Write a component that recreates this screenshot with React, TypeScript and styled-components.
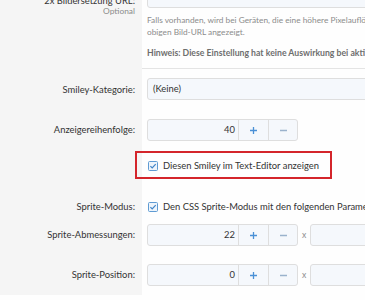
import React from 'react';
import styled, { createGlobalStyle } from 'styled-components';

const Global = createGlobalStyle`
  html, body { margin: 0; padding: 0; overflow: hidden; background: #fefefe; }
  body {
    font-family: Lato, "Noto Sans", sans-serif;
    font-size: 9.4px;
    color: #333333;
  }
`;

const Viewport = styled.div`
  width: 365px;
  height: 300px;
  overflow: hidden;
`;

const Form = styled.div`
  width: 640px;
  margin-top: -23px;
`;

const Row = styled.div`
  display: grid;
  grid-template-columns: 142px 1fr;
  position: relative;
`;

const LabelCell = styled.div<{ $pt: number; $pb: number; $lh: number }>`
  background: #f5f5f5;
  padding: ${p => p.$pt}px 7px ${p => p.$pb}px 0;
  text-align: right;
  line-height: ${p => p.$lh}px;
  white-space: nowrap;
`;

const Hint = styled.div`
  color: #8c8c8c;
  font-size: 8.4px;
  line-height: 10px;
  margin-top: -6px;
`;

const ContentCell = styled.div<{ $pt: number; $pb: number; $sep?: boolean }>`
  background: #fefefe;
  padding: ${p => p.$pt}px 0 ${p => p.$pb}px 5px;
  border-bottom: ${p => (p.$sep ? '1px solid #e4e4e4' : 'none')};
  min-width: 0;
`;

const TextBox = styled.div<{ $width: number }>`
  box-sizing: border-box;
  height: 22px;
  width: ${p => p.$width}px;
  border: 1px solid #dedede;
  border-radius: 3px;
  background: #f5f8fc;
  padding: 0 5px;
  line-height: 20px;
  color: #333333;
  white-space: nowrap;
`;

const Explain = styled.div`
  color: #8c8c8c;
  font-size: 8.3px;
  line-height: 12px;
  margin-top: 6px;
  white-space: nowrap;
`;

const Note = styled.div`
  color: #6e6e6e;
  font-size: 8.7px;
  font-weight: 700;
  line-height: 12px;
  margin-top: 9px;
  white-space: nowrap;
`;

const NumberGroup = styled.div`
  display: flex;
  align-items: center;
  gap: 4px;
`;

const NumberBox = styled.div`
  box-sizing: border-box;
  display: flex;
  height: 22px;
  width: 151px;
  flex: none;
  border: 1px solid #dedede;
  border-radius: 3px;
  background: #f5f8fc;
  overflow: hidden;
`;

const NumberValue = styled.div`
  flex: 1;
  text-align: right;
  padding-right: 3px;
  line-height: 20px;
  color: #333333;
`;

const StepButton = styled.div<{ $w: number }>`
  width: ${p => p.$w}px;
  border-left: 1px solid #dedede;
  display: flex;
  align-items: center;
  justify-content: center;
`;

const Times = styled.span`
  color: #8c8c8c;
  font-size: 8.6px;
  line-height: 22px;
`;

const CheckLine = styled.label`
  display: flex;
  align-items: center;
  gap: 5px;
  line-height: 16px;
  white-space: nowrap;
  padding-left: 1px;
`;

const Annotation = styled.div`
  position: absolute;
  left: 135px;
  top: 1px;
  width: 197px;
  height: 28px;
  box-sizing: border-box;
  border: 2px solid #d4252b;
  pointer-events: none;
`;

const Plus = () => (
  <svg width="9" height="9" viewBox="0 0 9 9">
    <path d="M4.5 1v7M1 4.5h7" stroke="#4a90d6" strokeWidth="1.3" />
  </svg>
);

const Minus = () => (
  <svg width="9" height="9" viewBox="0 0 9 9">
    <path d="M1 4.5h7" stroke="#9ab2cc" strokeWidth="1.3" />
  </svg>
);

const Check = () => (
  <svg width="10" height="10" viewBox="0 0 10 10">
    <rect x="0.5" y="0.5" width="9" height="9" rx="1" fill="#edf4fb" stroke="#5f9bd3" />
    <path d="M2.4 5.1l1.8 1.8 3.5-3.7" fill="none" stroke="#3f83c7" strokeWidth="1.2" />
  </svg>
);

const Stepper = ({ value }: { value: string }) => (
  <NumberBox>
    <NumberValue>{value}</NumberValue>
    <StepButton $w={29}><Plus /></StepButton>
    <StepButton $w={28}><Minus /></StepButton>
  </NumberBox>
);

export default function App() {
  return (
    <Viewport>
      <Global />
      <Form>
        <Row>
          <LabelCell $pt={13} $pb={9} $lh={22}>
            2x Bildersetzung URL:
            <Hint>Optional</Hint>
          </LabelCell>
          <ContentCell $pt={9} $pb={9} $sep>
            <TextBox $width={480} />
            <Explain>
              Falls vorhanden, wird bei Geräten, die eine höhere Pixelauflösung unterstützen, dieses Bild anstelle der
              <br />
              obigen Bild-URL angezeigt.
            </Explain>
            <Note>Hinweis: Diese Einstellung hat keine Auswirkung bei aktiviertem Sprite-Modus.</Note>
          </ContentCell>
        </Row>

        <Row>
          <LabelCell $pt={10} $pb={9} $lh={22}>Smiley-Kategorie:</LabelCell>
          <ContentCell $pt={9} $pb={9}>
            <TextBox $width={480}>(Keine)</TextBox>
          </ContentCell>
        </Row>

        <Row>
          <LabelCell $pt={9} $pb={9} $lh={22}>Anzeigereihenfolge:</LabelCell>
          <ContentCell $pt={9} $pb={9}>
            <Stepper value="40" />
          </ContentCell>
        </Row>

        <Row>
          <LabelCell $pt={8} $pb={10} $lh={16} />
          <ContentCell $pt={8} $pb={10}>
            <CheckLine>
              <Check />
              Diesen Smiley im Text-Editor anzeigen
            </CheckLine>
          </ContentCell>
          <Annotation />
        </Row>

        <Row>
          <LabelCell $pt={15} $pb={1} $lh={16}>Sprite-Modus:</LabelCell>
          <ContentCell $pt={15} $pb={1}>
            <CheckLine>
              <Check />
              Den CSS Sprite-Modus mit den folgenden Parametern aktivieren
            </CheckLine>
          </ContentCell>
        </Row>

        <Row>
          <LabelCell $pt={8} $pb={9} $lh={22}>Sprite-Abmessungen:</LabelCell>
          <ContentCell $pt={8} $pb={9}>
            <NumberGroup>
              <Stepper value="22" />
              <Times>x</Times>
              <Stepper value="22" />
            </NumberGroup>
          </ContentCell>
        </Row>

        <Row>
          <LabelCell $pt={9} $pb={9} $lh={22}>Sprite-Position:</LabelCell>
          <ContentCell $pt={9} $pb={9}>
            <NumberGroup>
              <Stepper value="0" />
              <Times>x</Times>
              <Stepper value="0" />
            </NumberGroup>
          </ContentCell>
        </Row>
      </Form>
    </Viewport>
  );
}
